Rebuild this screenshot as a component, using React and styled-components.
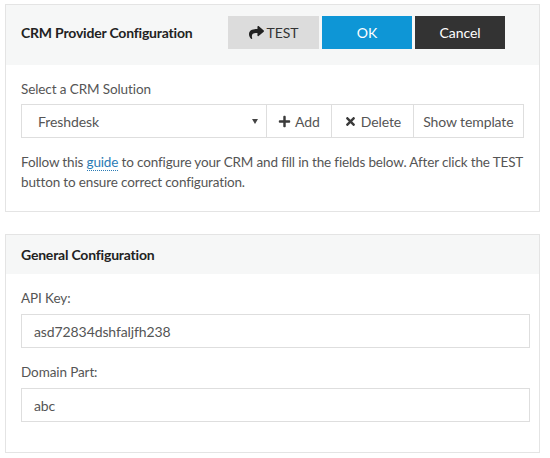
import React from "react";
import styled, { createGlobalStyle } from "styled-components";
import { FaShare, FaPlus, FaTimes } from "react-icons/fa";

const Global = createGlobalStyle`
  html, body { margin: 0; padding: 0; background: #fff; }
  body { font-family: "Lato", "Noto Sans", sans-serif; font-size: 13.5px; letter-spacing: -0.1px; color: #555; }
  * { box-sizing: border-box; }
`;

const Page = styled.div`
  padding: 4px 5px;
  display: flex;
  flex-direction: column;
  gap: 22px;
  width: 545px;
`;

const Panel = styled.section`
  border: 1px solid #e4e4e4;
  background: #fff;
`;

const PanelHeader = styled.header`
  background: #f6f7f7;
  height: ${(p) => p.$h}px;
  display: flex;
  align-items: center;
  padding: 0 15px ${(p) => p.$pb || 0}px;
`;

const Title = styled.h3`
  margin: 0;
  font-size: 14px;
  letter-spacing: -0.2px;
  font-weight: 700;
  color: #222;
  width: ${(p) => (p.$w ? `${p.$w}px` : "auto")};
`;

const Actions = styled.div`
  display: flex;
  gap: 3px;
`;

const HeadButton = styled.button`
  width: ${(p) => p.$w}px;
  height: 33px;
  border: none;
  border-radius: 0;
  font-family: inherit;
  font-size: 14px;
  letter-spacing: inherit;
  display: flex;
  align-items: center;
  justify-content: center;
  gap: 3px;
  background: ${(p) => p.$bg};
  color: ${(p) => p.$fg};
  cursor: pointer;
  svg { width: 15px; height: 15px; color: #222; }
`;

const PanelBody = styled.div`
  padding: ${(p) => p.$pad};
`;

const Label = styled.div`
  line-height: 20px;
  color: #555;
  margin-bottom: ${(p) => p.$mb || 5}px;
`;

const Group = styled.div`
  display: flex;
  height: 34px;
  margin-bottom: 14px;
`;

const SelectBox = styled.div`
  width: 247px;
  border: 1px solid #dedede;
  display: flex;
  align-items: center;
  justify-content: space-between;
  padding: 0 8px 0 16px;
  color: #555;
  font-size: 14px;
`;

const Caret = styled.span`
  width: 0;
  height: 0;
  border-left: 3px solid transparent;
  border-right: 3px solid transparent;
  border-top: 5px solid #444;
`;

const GroupButton = styled.button`
  width: ${(p) => p.$w}px;
  height: 34px;
  margin-left: -1px;
  border: 1px solid #dedede;
  background: #fff;
  font-family: inherit;
  font-size: 14px;
  letter-spacing: inherit;
  color: #555;
  display: flex;
  align-items: center;
  justify-content: center;
  gap: 4px;
  padding: 0;
  svg { width: 13px; height: 13px; color: #3a3a3a; }
`;

const Paragraph = styled.p`
  margin: 0 -12px 0 0;
  line-height: 20px;
  letter-spacing: -0.15px;
  color: #555;
`;

const Link = styled.a`
  color: #2b7bb5;
  text-decoration: none;
  border-bottom: 1px dotted #2b7bb5;
`;

const Input = styled.div`
  height: 34px;
  width: 509px;
  border: 1px solid #dedede;
  display: flex;
  align-items: center;
  padding: 0 12px;
  font-size: 14px;
  color: #555;
  margin-bottom: ${(p) => p.$mb || 0}px;
`;

export default function App() {
  return (
    <>
      <Global />
      <Page>
        <Panel>
          <PanelHeader $h={60} $pb={6}>
            <Title $w={207}>CRM Provider Configuration</Title>
            <Actions>
              <HeadButton $w={91} $bg="#dcdcdc" $fg="#333">
                <FaShare /> TEST
              </HeadButton>
              <HeadButton $w={90} $bg="#0e96d6" $fg="#fff">
                OK
              </HeadButton>
              <HeadButton $w={90} $bg="#333333" $fg="#fff">
                Cancel
              </HeadButton>
            </Actions>
          </PanelHeader>
          <PanelBody $pad="14px 15px 19px">
            <Label>Select a CRM Solution</Label>
            <Group>
              <SelectBox>
                Freshdesk <Caret />
              </SelectBox>
              <GroupButton $w={67}>
                <FaPlus /> Add
              </GroupButton>
              <GroupButton $w={83}>
                <FaTimes /> Delete
              </GroupButton>
              <GroupButton $w={112}>Show template</GroupButton>
            </Group>
            <Paragraph>
              Follow this <Link href="#">guide</Link> to configure your CRM and fill in the fields below. After click the TEST button to ensure correct configuration.
            </Paragraph>
          </PanelBody>
        </Panel>
        <Panel>
          <PanelHeader $h={39}>
            <Title>General Configuration</Title>
          </PanelHeader>
          <PanelBody $pad="14px 15px 30px">
            <Label $mb={6}>API Key:</Label>
            <Input $mb={14}>asd72834dshfaljfh238</Input>
            <Label $mb={6}>Domain Part:</Label>
            <Input>abc</Input>
          </PanelBody>
        </Panel>
      </Page>
    </>
  );
}
